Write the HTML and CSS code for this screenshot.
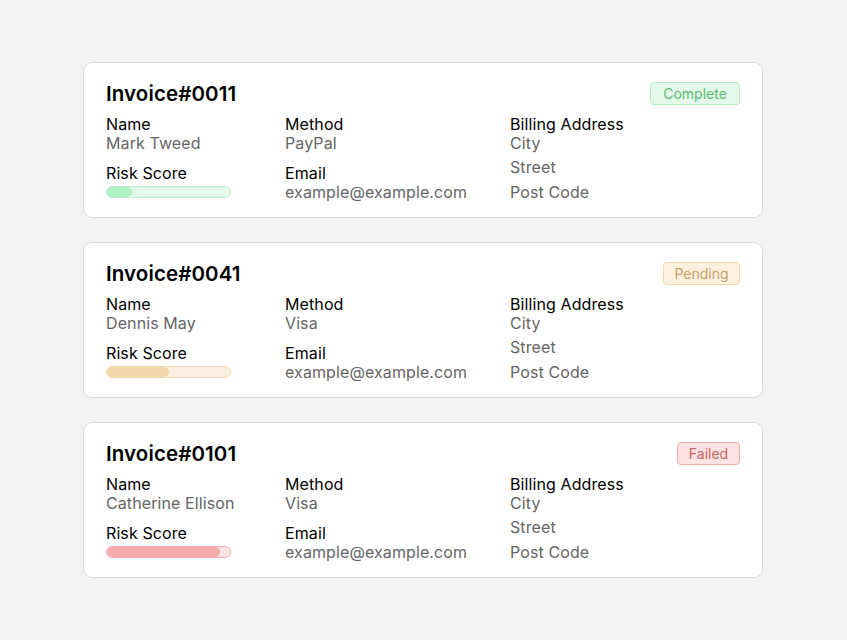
FILE: index.html
```html
<!DOCTYPE html>
<html>
<head>
<meta charset="utf-8">
<link rel="stylesheet" href="styles.css">
</head>
<body>
<main class="list">
  <section class="card">
    <header class="card-head">
      <h2 class="title">Invoice#0011</h2>
      <span class="badge badge-complete">Complete</span>
    </header>
    <div class="grid">
      <div class="col">
        <div class="field"><div class="label">Name</div><div class="value">Mark Tweed</div></div>
        <div class="field"><div class="label">Risk Score</div><div class="bar bar-green"><div class="fill" style="width:20%"></div></div></div>
      </div>
      <div class="col">
        <div class="field"><div class="label">Method</div><div class="value">PayPal</div></div>
        <div class="field"><div class="label">Email</div><div class="value">example@example.com</div></div>
      </div>
      <div class="col">
        <div class="label">Billing Address</div>
        <div class="value">City</div>
        <div class="value addr">Street</div>
        <div class="value addr addr-last">Post Code</div>
      </div>
    </div>
  </section>

  <section class="card">
    <header class="card-head">
      <h2 class="title">Invoice#0041</h2>
      <span class="badge badge-pending">Pending</span>
    </header>
    <div class="grid">
      <div class="col">
        <div class="field"><div class="label">Name</div><div class="value">Dennis May</div></div>
        <div class="field"><div class="label">Risk Score</div><div class="bar bar-orange"><div class="fill" style="width:50%"></div></div></div>
      </div>
      <div class="col">
        <div class="field"><div class="label">Method</div><div class="value">Visa</div></div>
        <div class="field"><div class="label">Email</div><div class="value">example@example.com</div></div>
      </div>
      <div class="col">
        <div class="label">Billing Address</div>
        <div class="value">City</div>
        <div class="value addr">Street</div>
        <div class="value addr addr-last">Post Code</div>
      </div>
    </div>
  </section>

  <section class="card">
    <header class="card-head">
      <h2 class="title">Invoice#0101</h2>
      <span class="badge badge-failed">Failed</span>
    </header>
    <div class="grid">
      <div class="col">
        <div class="field"><div class="label">Name</div><div class="value">Catherine Ellison</div></div>
        <div class="field"><div class="label">Risk Score</div><div class="bar bar-red"><div class="fill" style="width:92%"></div></div></div>
      </div>
      <div class="col">
        <div class="field"><div class="label">Method</div><div class="value">Visa</div></div>
        <div class="field"><div class="label">Email</div><div class="value">example@example.com</div></div>
      </div>
      <div class="col">
        <div class="label">Billing Address</div>
        <div class="value">City</div>
        <div class="value addr">Street</div>
        <div class="value addr addr-last">Post Code</div>
      </div>
    </div>
  </section>
</main>
</body>
</html>
```

FILE: styles.css
```css
* { box-sizing: border-box; }
html, body { margin: 0; padding: 0; }
body {
  background: #f2f2f2;
  font-family: Inter, "Noto Sans", sans-serif;
  color: #111;
  width: 847px;
  height: 640px;
}
.list {
  display: flex;
  flex-direction: column;
  gap: 24px;
  padding: 62px 84px 0 83px;
}
.card {
  background: #fff;
  border: 1px solid #dadada;
  border-radius: 9px;
  padding: 19px 22px 14px 22px;
  height: 156px;
}
.card-head {
  display: flex;
  justify-content: space-between;
  align-items: center;
  height: 24px;
  margin-bottom: 9px;
}
.title {
  margin: 0;
  font-size: 20.5px;
  font-weight: 600;
  line-height: 24px;
  color: #000;
  letter-spacing: 0.1px;
}
.badge {
  display: inline-flex;
  align-items: center;
  justify-content: center;
  height: 23px;
  padding: 0 10px;
  border-radius: 4px;
  font-size: 14px;
  border: 1px solid;
  margin-top: -1px;
}
.badge-complete { width: 90px; background: #e4f9e9; border-color: #b3edc3; color: #5cb874; }
.badge-pending { width: 77px; background: #fcf0df; border-color: #f2d7a6; color: #c6a06a; }
.badge-failed { width: 63px; background: #fde2e2; border-color: #f3a9a9; color: #c56363; }
.grid {
  display: grid;
  grid-template-columns: 179px 225px 1fr;
}
.col { display: flex; flex-direction: column; }
.field + .field { margin-top: 11px; }
.label {
  font-size: 16px;
  line-height: 19px;
  color: #000;
  letter-spacing: 0.1px;
}
.value {
  font-size: 16px;
  line-height: 19px;
  color: #666;
  letter-spacing: 0.1px;
}
.addr { margin-top: 5px; }
.addr-last { margin-top: 6px; }
.bar {
  margin-top: 3px;
  width: 125px;
  height: 12px;
  border-radius: 6px;
  border: 1px solid;
  overflow: hidden;
}
.fill { height: 100%; border-radius: 6px; }
.bar-green { background: #e3fae9; border-color: #b8efc8; }
.bar-green .fill { background: #aef0c2; }
.bar-orange { background: #fcefdf; border-color: #f3d9aa; }
.bar-orange .fill { background: #f3d8aa; }
.bar-red { background: #fde3e3; border-color: #f4abab; }
.bar-red .fill { background: #f4abab; }
```
